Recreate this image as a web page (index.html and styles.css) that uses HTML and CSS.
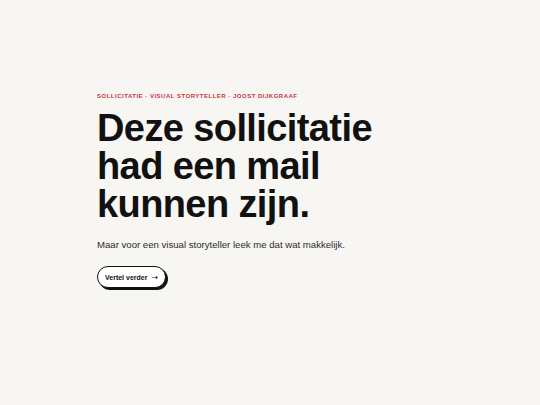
FILE: index.html
```html
<!DOCTYPE html>
<html lang="nl">
<head>
<meta charset="utf-8">
<link rel="stylesheet" href="styles.css">
</head>
<body>
<main class="hero">
  <p class="crumbs">Sollicitatie · Visual storyteller · Joost Dijkgraaf</p>
  <h1 class="title">Deze sollicitatie<br>had een mail<br>kunnen zijn.</h1>
  <p class="lead">Maar voor een visual storyteller leek me dat wat makkelijk.</p>
  <a class="btn" href="#">Vertel verder <span class="arrow">→</span></a>
</main>
</body>
</html>
```
FILE: styles.css
```css
html, body {
  margin: 0;
  padding: 0;
  background: #f7f6f2;
}
body {
  font-family: "Liberation Sans", Arial, sans-serif;
  color: #111;
  width: 540px;
  height: 405px;
}
.hero {
  padding: 92px 0 0 97px;
  display: flex;
  flex-direction: column;
  align-items: flex-start;
}
.crumbs {
  margin: 0;
  font-size: 6px;
  font-weight: 700;
  letter-spacing: 0.5px;
  text-transform: uppercase;
  color: #c9343d;
  line-height: 8px;
}
.title {
  margin: 9px 0 0 0;
  font-size: 38px;
  font-weight: 700;
  line-height: 38px;
  letter-spacing: -0.6px;
  color: #111;
}
.lead {
  margin: 16px 0 0 0;
  font-size: 9.6px;
  line-height: 12px;
  color: #2b2b2b;
  font-variant-ligatures: none;
}
.btn {
  margin-top: 15px;
  display: inline-flex;
  align-items: center;
  height: 20px;
  padding: 0 7px;
  border: 1.5px solid #111;
  border-radius: 12px;
  background: #fff;
  box-shadow: 2px 2px 0 #111;
  font-size: 7px;
  font-weight: 700;
  color: #111;
  text-decoration: none;
}
.arrow {
  margin-left: 4px;
  font-weight: 400;
  font-family: "DejaVu Sans", sans-serif;
  font-size: 8px;
}
```
